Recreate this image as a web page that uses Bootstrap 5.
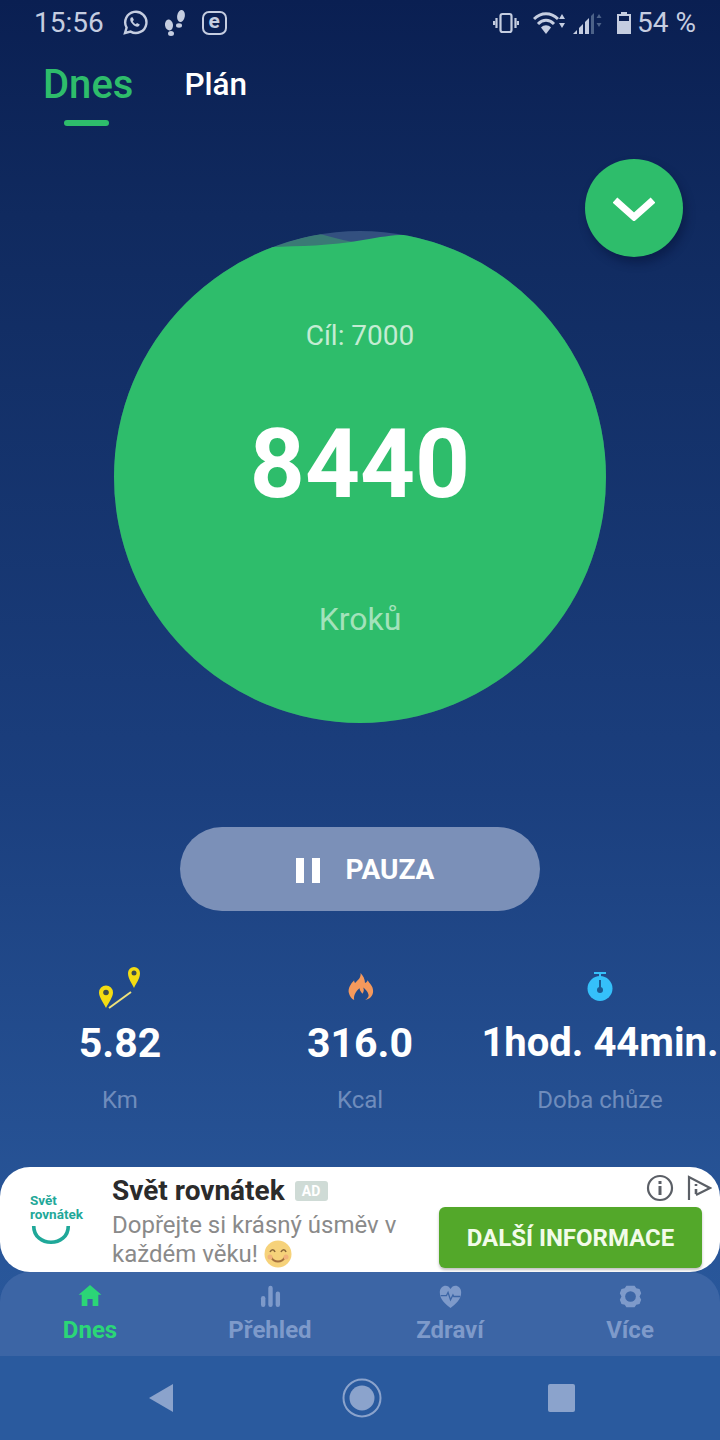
<!DOCTYPE html>
<html lang="cs">
<head>
  <meta charset="UTF-8">
  <title>Kroky</title>
  <link href="https://cdn.jsdelivr.net/npm/bootstrap@5.3.0/dist/css/bootstrap.min.css" rel="stylesheet">
  <style>
    body {
      margin: 0;
      background: #0b1f52;
      font-family: Roboto, "Liberation Sans", sans-serif;
    }

    .phone {
      position: relative;
      width: 720px;
      height: 1440px;
      overflow: hidden;
      background: linear-gradient(180deg, #0a1f52 0%, #102a5f 15%, #1b3f7e 55%, #285598 85%, #2a5a9e 100%);
    }

    .status-row {
      height: 46px;
      padding: 0 24px 0 34px;
      color: #c5cde0;
      font-size: 28px;
      line-height: 46px;
    }

    .status-icons { gap: 16px; margin-left: 18px; }
    .status-icons-right { gap: 6px; }

    .e-box {
      width: 25px;
      height: 24px;
      border: 2px solid #c5cde0;
      border-radius: 7px;
      font-size: 21px;
      font-weight: 700;
      line-height: 17px;
      text-align: center;
    }

    .tabs-row {
      height: 90px;
      padding-left: 43px;
      gap: 51px;
    }

    .tab-today {
      position: relative;
      color: #2ebd6b;
      font-size: 40px;
      font-weight: 500;
      line-height: 78px;
    }

    .tab-today::after {
      content: "";
      position: absolute;
      left: 21px;
      top: 74px;
      width: 45px;
      height: 6px;
      border-radius: 3px;
      background: #2ebd6b;
    }

    .tab-plan {
      color: #fff;
      font-size: 31.500px;
      font-weight: 500;
      line-height: 78px;
    }

    .fab {
      position: absolute;
      left: 585px;
      top: 159px;
      width: 98px;
      height: 98px;
      border-radius: 50%;
      background: #2ebd6b;
      box-shadow: 3px 6px 10px rgba(5, 15, 50, .45);
    }

    .ring-area {
      height: 775px;
      padding-top: 95px;
    }

    .ring {
      position: relative;
      width: 492px;
      height: 492px;
    }

    .ring svg { position: absolute; left: 0; top: 0; }

    .ring-text {
      position: absolute;
      left: 0;
      top: 0;
      width: 492px;
      height: 492px;
      text-align: center;
    }

    .goal-text {
      padding-top: 87px;
      color: #c4ecd3;
      font-size: 28px;
      line-height: 36px;
    }

    .steps-num {
      margin-top: 50px;
      color: #fff;
      font-size: 96px;
      font-weight: 700;
      line-height: 120px;
    }

    .steps-label {
      margin-top: 75px;
      color: #a3e2bb;
      font-size: 32px;
      line-height: 40px;
    }

    .pause-btn {
      width: 360px;
      height: 84px;
      margin-top: 104px;
      padding: 2px 0 0 10px;
      border: 0;
      border-radius: 42px;
      background: #7b90b8;
      color: #fff;
      font-size: 28px;
      font-weight: 700;
      gap: 26px;
    }

    .pause-bars { gap: 8px; }
    .pause-bars i {
      display: block;
      width: 8px;
      height: 25px;
      background: #fff;
    }

    .stats-row {
      height: 256px;
      padding-top: 54px;
    }

    .stat-icon { height: 44px; }

    .stat-value {
      margin-top: 11px;
      color: #fff;
      font-size: 41px;
      font-weight: 700;
      line-height: 46px;
      white-space: nowrap;
    }

    .stat-value-long { font-size: 40px; }

    .stat-label {
      margin-top: 19px;
      color: #6f8cbc;
      font-size: 24px;
      line-height: 30px;
    }

    .ad-box {
      height: 105px;
      border-radius: 30px;
      background: #fff;
      position: relative;
    }

    .ad-logo {
      width: 112px;
      padding-left: 30px;
      color: #1fa899;
      font-size: 13.500px;
      font-weight: 700;
      line-height: 13.500px;
    }

    .ad-title {
      color: #2b2b2b;
      font-size: 28px;
      font-weight: 700;
      line-height: 34px;
      margin-top: 7px;
    }

    .ad-tag {
      display: inline-block;
      margin-left: 3px;
      width: 33px;
      height: 20px;
      border-radius: 3px;
      background: #cfdbd6;
      color: #fff;
      font-size: 14px;
      font-weight: 700;
      line-height: 20px;
      text-align: center;
      vertical-align: 4px;
    }

    .ad-copy {
      width: 320px;
      color: #8a8a8a;
      font-size: 24px;
      line-height: 29px;
      margin-top: 3px;
    }

    .ad-btn {
      position: absolute;
      left: 439px;
      top: 40px;
      width: 263px;
      height: 61px;
      border: 0;
      border-radius: 6px;
      background: #53a82a;
      color: #f2fbe9;
      font-size: 24px;
      font-weight: 700;
      box-shadow: 0 2px 3px rgba(0, 0, 0, .25);
    }

    .ad-marks {
      position: absolute;
      left: 646px;
      top: 7px;
      gap: 12px;
    }

    .tab-bar {
      height: 84px;
      border-radius: 30px 30px 0 0;
      background: #3c65a5;
    }

    .tab-item {
      color: #7e9aca;
      font-size: 24px;
      font-weight: 700;
      line-height: 30px;
      padding-top: 9px;
    }

    .tab-item.on { color: #2bd677; }
    .tab-glyph { height: 34px; padding-top: 4px; }
    .tab-glyph svg { display: block; margin: 0 auto; }

    .sys-bar {
      height: 84px;
      background: #2a5a9e;
    }

    .sys-stop {
      width: 27px;
      height: 28px;
      margin-left: 166px;
      border-radius: 2px;
      background: #8ba3cc;
    }
  </style>
</head>
<body>

  <div class="phone d-flex flex-column">

    <!-- status bar -->
    <div class="status-row d-flex align-items-center flex-shrink-0">
      <span>15:56</span>
      <div class="status-icons d-flex align-items-center">
        <svg width="26" height="26" viewBox="0 0 26 26" fill="none" stroke="#c5cde0" stroke-width="2.400">
          <path d="M3 23l1.600-5.400A10.600 10.600 0 1 1 8.600 21.600z"/>
          <path d="M9 7.500c-1.500 1.500-.8 4 1.500 6.500s5 3.400 6.500 2l.8-1.500-2.800-1.500-1.200 1.200c-1.300-.6-2.400-1.800-3-3l1.100-1.200-1.300-2.800z" fill="#c5cde0" stroke="none"/>
        </svg>
        <svg width="22" height="26" viewBox="0 0 22 26" fill="#c5cde0">
          <ellipse cx="17" cy="6" rx="3.800" ry="6" transform="rotate(10 17 6)"/>
          <ellipse cx="15" cy="15.500" rx="3" ry="2.200"/>
          <ellipse cx="5" cy="15" rx="4" ry="5.500" transform="rotate(-10 5 15)"/>
          <ellipse cx="7" cy="23.500" rx="3" ry="2.500"/>
        </svg>
        <div class="e-box">e</div>
      </div>
      <div class="status-icons-right d-flex align-items-center ms-auto">
        <svg width="26" height="24" viewBox="0 0 26 24" fill="none" stroke="#c5cde0" stroke-width="2.200">
          <rect x="7.500" y="3" width="11" height="18" rx="2"/>
          <path d="M3.500 7v10M1 10v4M22.500 7v10M25 10v4"/>
        </svg>
        <svg class="ms-2" width="33" height="24" viewBox="0 0 33 24">
          <g fill="none" stroke="#c5cde0" stroke-width="3">
            <path d="M1 8C8 1 18 1 25 8"/>
            <path d="M5 13C10 8 16 8 21 13"/>
          </g>
          <path d="M8 16.500C11 13.500 15 13.500 18 16.500L13 23z" fill="#c5cde0"/>
          <path d="M29 3l3 5h-6zM29 17l-3-5h6z" fill="#c5cde0"/>
        </svg>
        <svg width="31" height="24" viewBox="0 0 31 24">
          <path d="M1 23l4-4v4zM7 23v-6l4-4v10zM13 23V11l4-4v16z" fill="#c5cde0"/>
          <path d="M19 23V5l3-3v21z" fill="#4c6288"/>
          <path d="M27 3l2.500 4h-5zM27 16l-2.500-4h5z" fill="#4c6288"/>
        </svg>
        <svg class="ms-2" width="14" height="24" viewBox="0 0 14 24">
          <path d="M4 1h6v2h4v20H0V3h4z" fill="#c5cde0"/>
          <path d="M2 5h10v5H2z" fill="#0a1f52"/>
        </svg>
        <span>54 %</span>
      </div>
    </div>

    <!-- Dnes / Plan -->
    <div class="tabs-row d-flex align-items-start flex-shrink-0">
      <span class="tab-today">Dnes</span>
      <span class="tab-plan">Plán</span>
    </div>

    <div class="fab d-flex align-items-center justify-content-center">
      <svg width="42" height="26" viewBox="0 0 42 26" fill="none" stroke="#fff" stroke-width="7">
        <path d="M2 5l19 17L40 5"/>
      </svg>
    </div>

    <!-- step circle + pause -->
    <div class="ring-area d-flex flex-column align-items-center flex-shrink-0">
      <div class="ring">
        <svg width="492" height="492" viewBox="114 231 492 492">
          <defs><clipPath id="disc"><circle cx="360" cy="477" r="246"/></clipPath></defs>
          <g clip-path="url(#disc)">
            <rect x="114" y="231" width="492" height="492" fill="#33507f"/>
            <path d="M270 248C290 241 305 236 320 234C335 238 350 243 370 243V300H270z" fill="#3a7a75"/>
            <path d="M270 247C300 246 330 246 363 240C380 237 392 235 404 235H620V730H100V247z" fill="#2ebd6b"/>
          </g>
        </svg>
        <div class="ring-text">
          <div class="goal-text">Cíl: 7000</div>
          <div class="steps-num">8440</div>
          <div class="steps-label">Kroků</div>
        </div>
      </div>
      <button class="pause-btn d-flex align-items-center justify-content-center flex-shrink-0">
        <span class="pause-bars d-flex"><i></i><i></i></span>
        <span>PAUZA</span>
      </button>
    </div>

    <!-- stats -->
    <div class="stats-row row g-0 text-center flex-shrink-0">
      <div class="col-4">
        <div class="stat-icon d-flex justify-content-center">
          <svg width="44" height="44" viewBox="0 0 44 44">
            <path d="M8 43C5 37 1 32 1 27.500a7 7 0 0 1 14 0C15 32 11 37 8 43z" fill="#f3dc12"/>
            <circle cx="8" cy="27.500" r="2.800" fill="#3d4d4d"/>
            <path d="M36 23C34 18 30 14 30 8a6 6 0 0 1 12 0C42 14 38 18 36 23z" fill="#f3dc12"/>
            <circle cx="36" cy="8" r="2.500" fill="#3d4d4d"/>
            <path d="M11 43l22-16" stroke="#efe27a" stroke-width="2"/>
          </svg>
        </div>
        <div class="stat-value">5.82</div>
        <div class="stat-label">Km</div>
      </div>
      <div class="col-4">
        <div class="stat-icon d-flex justify-content-center align-items-end">
          <svg class="mb-2" width="27" height="28" viewBox="0 8 30 31" fill="#f5995c">
            <path d="M15 8c1 5-3 8-6 11-1-1-1-2-1-3-4 4-7 9-6 14 1 4 3 7 6 8-1-5 2-10 6-13 0 3 2 4 3 6 2-2 2-5 1-7 3 2 6 6 6 9 0 2-2 4-4 5 6-1 9-5 9-10 0-6-4-8-6-12-1 2-2 3-3 3 0-4-2-8-5-11z"/>
          </svg>
        </div>
        <div class="stat-value">316.0</div>
        <div class="stat-label">Kcal</div>
      </div>
      <div class="col-4">
        <div class="stat-icon d-flex justify-content-center align-items-end">
          <svg class="mb-2" width="26" height="29" viewBox="0 0 26 29">
            <path d="M7 0h12v2h-5v3h-2V2H7z" fill="#35c0fa"/>
            <circle cx="13" cy="16.500" r="12.500" fill="#35c0fa"/>
            <path d="M13 8v10" stroke="#1b5a92" stroke-width="2"/>
            <circle cx="13" cy="18" r="3" fill="#1b5a92"/>
          </svg>
        </div>
        <div class="stat-value stat-value-long">1hod. 44min.</div>
        <div class="stat-label">Doba chůze</div>
      </div>
    </div>

    <!-- ad -->
    <div class="ad-box d-flex flex-shrink-0">
      <div class="ad-logo d-flex flex-column justify-content-center">
        <span>Svět</span>
        <span>rovnátek</span>
        <svg class="mt-1" width="42" height="20" viewBox="0 0 44 22" fill="none" stroke="#1fa899" stroke-width="4">
          <path d="M3 1c0 24 38 24 38 0"/>
        </svg>
      </div>
      <div>
        <div class="ad-title">Svět rovnátek <span class="ad-tag">AD</span></div>
        <div class="ad-copy">Dopřejte si krásný úsměv v každém věku!
          <svg width="28" height="28" viewBox="0 0 28 28" style="vertical-align:-6px">
            <circle cx="14" cy="14" r="13.500" fill="#f6d27a"/>
            <path d="M6 12c1.500-3 4-3 5 0M17 12c1.500-3 4-3 5 0" fill="none" stroke="#8c6a3a" stroke-width="1.600"/>
            <path d="M7 17c3 6 11 6 14 0" fill="none" stroke="#a5713f" stroke-width="1.800"/>
            <circle cx="6" cy="17" r="2.500" fill="#f2b27a"/>
            <circle cx="22" cy="17" r="2.500" fill="#f2b27a"/>
          </svg>
        </div>
      </div>
      <div class="ad-marks d-flex align-items-center">
        <svg width="28" height="28" viewBox="0 0 28 28" fill="none" stroke="#5b5f66" stroke-width="2.200">
          <circle cx="14" cy="14" r="12"/>
          <path d="M14 12v9M14 7v3" stroke-width="3"/>
        </svg>
        <svg width="26" height="28" viewBox="0 0 26 28" fill="none" stroke="#5b5f66" stroke-width="2.200">
          <path d="M3 26V3l21 11-14 7"/>
          <path d="M10 10v2M10 15v5" stroke-width="2.600"/>
        </svg>
      </div>
      <button class="ad-btn">DALŠÍ INFORMACE</button>
    </div>

    <!-- bottom tabs -->
    <div class="tab-bar row g-0 text-center flex-shrink-0">
      <div class="col-3 tab-item on">
        <div class="tab-glyph">
          <svg width="24" height="21" viewBox="0 0 26 24" fill="#2bd677">
            <path d="M13 0L0 11h3.500v13H10v-8h6v8h6.500V11H26z"/>
          </svg>
        </div>
        Dnes
      </div>
      <div class="col-3 tab-item">
        <div class="tab-glyph">
          <svg width="25" height="22" viewBox="0 0 26 30" fill="#7e9aca">
            <rect x="0" y="15" width="6" height="15" rx="3"/>
            <rect x="10" y="1" width="6" height="29" rx="3"/>
            <rect x="20" y="9" width="6" height="21" rx="3"/>
          </svg>
        </div>
        Přehled
      </div>
      <div class="col-3 tab-item">
        <div class="tab-glyph">
          <svg width="25" height="23" viewBox="0 0 28 28">
            <path d="M14 28C8 23 1 18 1 9c0-9 10-11 13-4 3-7 13-5 13 4 0 9-7 14-13 19z" fill="#7e9aca"/>
            <path d="M2 13h7l2-4 3 9 3-6 1 2h8" fill="none" stroke="#3c65a5" stroke-width="1.600"/>
          </svg>
        </div>
        Zdraví
      </div>
      <div class="col-3 tab-item">
        <div class="tab-glyph">
          <svg width="25" height="23" viewBox="0 0 26 28">
            <path d="M8 1h10l2 3 4 1 2 5-2 4 2 4-2 5-4 1-2 3H8l-2-3-4-1-2-5 2-4-2-4 2-5 4-1z" fill="#7e9aca"/>
            <circle cx="13" cy="14" r="6.500" fill="#3c65a5"/>
          </svg>
        </div>
        Více
      </div>
    </div>

    <!-- android nav -->
    <div class="sys-bar d-flex align-items-center flex-shrink-0">
      <svg style="margin-left:148px" width="26" height="30" viewBox="0 0 26 30" fill="#8ba3cc">
        <path d="M25 1v28L1 15z"/>
      </svg>
      <svg style="margin-left:168px" width="40" height="40" viewBox="0 0 40 40">
        <circle cx="20" cy="20" r="18.500" fill="none" stroke="#8ba3cc" stroke-width="2"/>
        <circle cx="20" cy="20" r="12.500" fill="#8ba3cc"/>
      </svg>
      <div class="sys-stop"></div>
    </div>

  </div>

  <script src="https://cdn.jsdelivr.net/npm/bootstrap@5.3.0/dist/js/bootstrap.bundle.min.js"></script>
</body>
</html>
